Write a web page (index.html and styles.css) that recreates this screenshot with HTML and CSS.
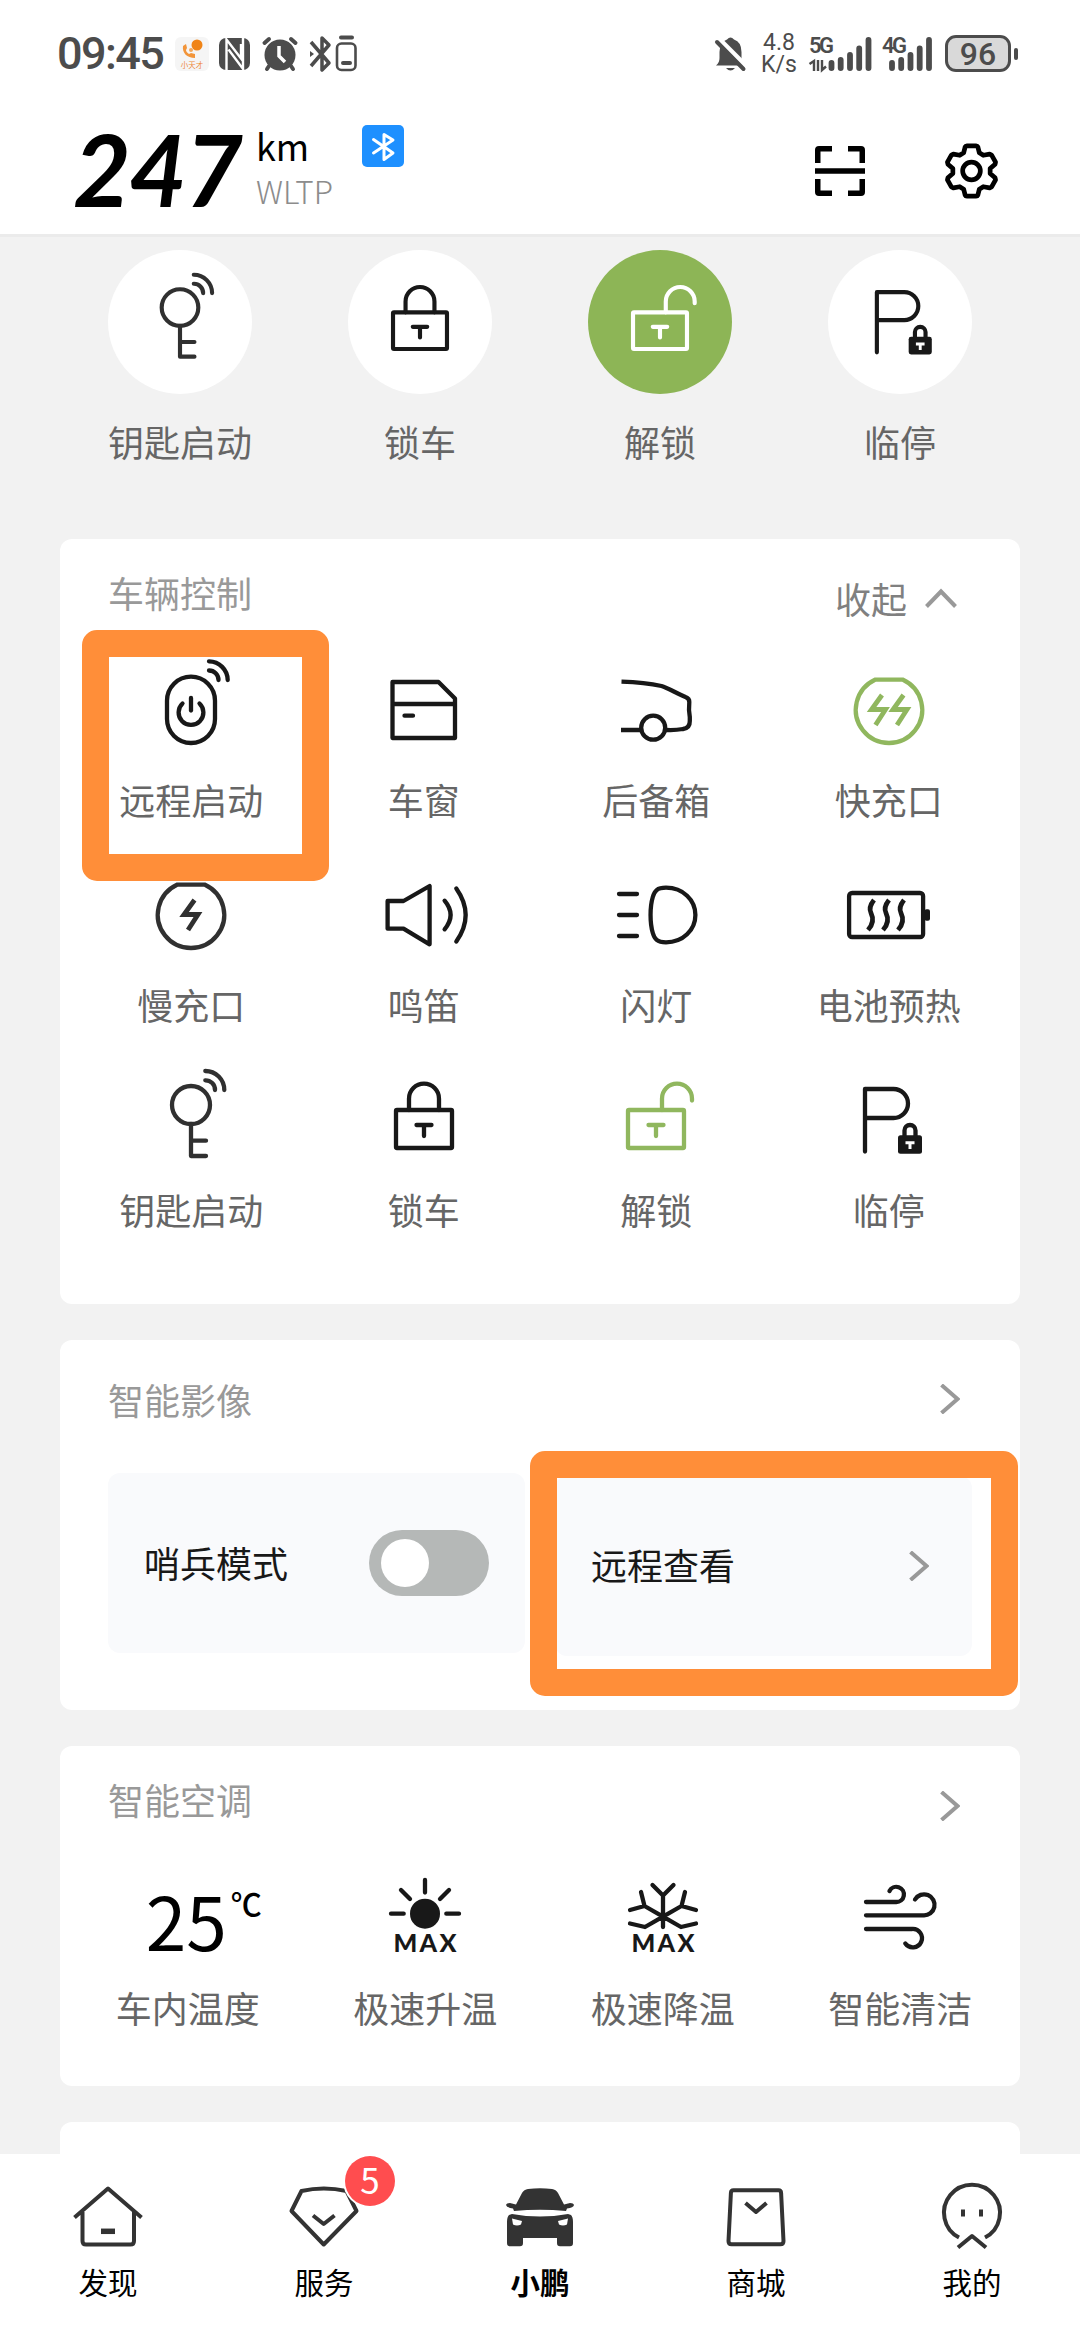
FILE: index.html
```html
<!DOCTYPE html>
<html lang="zh-CN">
<head>
<meta charset="utf-8">
<title>车辆控制</title>
<link rel="stylesheet" href="styles.css">
</head>
<body>
<svg class="defs" aria-hidden="true">
  <symbol id="key" viewBox="0 0 110 110"><circle cx="55" cy="40" r="19"/><path d="M55 59V91H70M55 75.7H70"/><path d="M69.3 6A19 19 0 0 1 88.3 25M69.3 15.3A9.5 9.5 0 0 1 79 25"/></symbol>
  <symbol id="lock" viewBox="0 0 110 110"><rect x="27" y="45" width="56" height="38" rx="1"/><path d="M40 45V33.7a15 15 0 0 1 30 0V45M47.5 60H62.5M55 60V71"/></symbol>
  <symbol id="unlock" viewBox="0 0 110 110"><rect x="27" y="45" width="56" height="38" rx="1"/><path d="M61 45V33.7a15 15 0 0 1 30 0V35.5M47.5 60H62.5M55 60V71"/></symbol>
  <symbol id="park" viewBox="0 0 110 110"><path d="M31 86.5V24H59.5a14.5 14.5 0 0 1 0 29H31"/><rect class="solid" x="64" y="70.3" width="24" height="18.4" rx="2.5"/><path d="M70.5 71V65.5a5.5 5.5 0 0 1 11 0V71"/><path class="notch" d="M71.5 77.8H80.5M76 77V84"/></symbol>
  <symbol id="arrow" viewBox="0 0 20 30"><path d="M1.500 1L17.500 15L1.500 29"/></symbol>
</svg>

<div class="status">
  <span class="clock">09:45</span>
  <svg class="s-app" viewBox="0 0 34 34"><rect width="34" height="34" rx="6" fill="#f5f5f5"/><circle cx="22" cy="8" r="5.500" fill="#f08416"/><path d="M8 9C7 16 12 21 20 21V17L16 16L14 17C12 16 11 14 11 13L12 11L11 7Z" fill="#f2953a"/><circle cx="16" cy="13" r="2" fill="#f5a85a"/><text x="17" y="30.500" text-anchor="middle" font-size="7.500" fill="#ee8a3a">小天才</text></svg>
  <svg class="s-nfc" viewBox="0 0 32 34"><rect y="1" width="31" height="32" rx="7" fill="#4c4c4c"/><path d="M7.500 33V2.500L22 21.500V7M9.500 12.500L24 32V1" fill="none" stroke="#fff" stroke-width="2.400"/></svg>
  <svg class="s-alarm" viewBox="0 0 36 36"><g fill="none" stroke="#4c4c4c" stroke-width="4" stroke-linecap="round"><path d="M2.500 7L7 3M33.500 7L29 3M7 30L5 33M29 30L31 33"/></g><circle cx="18" cy="19" r="15.500" fill="#4c4c4c"/><path d="M17 10V20L23 26" fill="none" stroke="#fff" stroke-width="3.500"/></svg>
  <svg class="s-bt" viewBox="0 0 48 36"><g fill="none" stroke="#4c4c4c" stroke-width="3.500" stroke-linejoin="round"><path d="M2 6L20 27L13 34V2L20 9L2 30"/><rect x="28" y="7.500" width="18.500" height="26.500" rx="4.500" stroke-width="2.600"/></g><path d="M32 1.500H43M34 27H41" stroke="#4c4c4c" stroke-width="4" stroke-linecap="round"/><path d="M1 15L5 18L1 21Z" fill="#4c4c4c"/></svg>
  <span class="grow"></span>
  <svg class="s-bell" viewBox="0 0 31 36"><path d="M1 29.500Q4.500 27 4.500 22V16Q4.500 6 12 3.500Q15.500-0.500 19 3.500Q26.500 6 26.500 16V22Q26.500 27 30 29.500Z" fill="#4c4c4c"/><path d="M11 32H20Q15.500 37 11 32Z" fill="#4c4c4c"/><path d="M3 2L31 30" stroke="#fff" stroke-width="5"/><path d="M2 6L28.500 33" stroke="#4c4c4c" stroke-width="4" stroke-linecap="round"/></svg>
  <div class="speed"><span>4.8</span><span>K/s</span></div>
  <div class="signal">
    <span class="net">5G</span>
    <svg viewBox="0 0 63 36"><path d="M0.500 28L5 25V35M9 24V35M13 24V34L17 30.500" fill="none" stroke="#4c4c4c" stroke-width="2.400"/><path d="M22.500 27V32M31.700 24V32M41 19V32M50.200 12.500V32M59.500 4V32" stroke="#4c4c4c" stroke-width="5.800" stroke-linecap="round"/></svg>
  </div>
  <div class="signal second">
    <span class="net">4G</span>
    <svg viewBox="0 0 63 36"><path d="M10 27V32M19.200 24V32M28.500 19V32M37.700 12.500V32M47 4V32" stroke="#4c4c4c" stroke-width="5.800" stroke-linecap="round"/></svg>
  </div>
  <span class="battery">96</span><span class="nub"></span>
</div>

<header class="top">
  <span class="range">247</span>
  <div class="unit"><span class="km">km</span><span class="wltp">WLTP</span></div>
  <svg class="ble" viewBox="0 0 42 42"><rect width="42" height="42" rx="5" fill="#1e90ff"/><path d="M11.500 14.500L31 28L22 34.500V9.500L31 15L11.500 28" fill="none" stroke="#fff" stroke-width="3" stroke-linecap="round" stroke-linejoin="round"/></svg>
  <span class="grow"></span>
  <svg class="scan" viewBox="0 0 50 50"><path d="M2.750 17V4Q2.750 2.750 4 2.750H17M33 2.750H46Q47.250 2.750 47.250 4V17M2.750 33V46Q2.750 47.250 4 47.250H17M33 47.250H46Q47.250 47.250 47.250 46V33M0 25H50"/></svg>
  <svg class="gear" viewBox="0 0 54 56"><circle cx="27" cy="28" r="9"/><path d="M20.500 3.500Q21 2.300 22.300 2.300H31.700Q33 2.300 33.500 3.500L35 9.500L39 12L45.500 10.800L47.500 11.800L51.500 19L51 21L46 25.500V30.500L51 35L51.500 37L47.500 44.200L45.500 45.200L39 44L35 46.500L33.500 52.500Q33 53.700 31.700 53.700H22.300Q21 53.700 20.500 52.500L19 46.500L15 44L8.500 45.200L6.500 44.200L2.500 37L3 35L8 30.500V25.500L3 21L2.500 19L6.500 11.800L8.500 10.800L15 12L19 9.500Z"/></svg>
</header>

<main class="content">
  <section class="quick">
    <div class="cell"><span class="disc soft"><svg class="icon"><use href="#key"/></svg></span><span class="label">钥匙启动</span></div>
    <div class="cell"><span class="disc"><svg class="icon"><use href="#lock"/></svg></span><span class="label">锁车</span></div>
    <div class="cell"><span class="disc on"><svg class="icon"><use href="#unlock"/></svg></span><span class="label">解锁</span></div>
    <div class="cell"><span class="disc"><svg class="icon"><use href="#park"/></svg></span><span class="label">临停</span></div>
  </section>

  <section class="card control">
    <div class="head"><h2>车辆控制</h2><span class="fold">收起<svg viewBox="0 0 32 20"><path d="M1.500 18.500L16 3.500L30.500 18.500"/></svg></span></div>
    <div class="grid">
      <div class="cell"><svg class="icon" viewBox="0 0 110 110"><rect x="31" y="21.700" width="48" height="66.300" rx="24"/><path d="M46.500 48.500A12.400 12.400 0 1 0 63.500 48.500"/><path d="M55 43V55.500"/><path d="M73 6.300A19 19 0 0 1 91.700 25M73 15.500A9.500 9.500 0 0 1 82.500 25"/></svg><span class="label">远程启动</span></div>
      <div class="cell"><svg class="icon" viewBox="0 0 110 110"><path d="M23.500 27H69.500L86 43.500V83H23.500ZM23.500 49H86M35.500 60.700H44"/></svg><span class="label">车窗</span></div>
      <div class="cell"><svg class="icon butt" viewBox="0 0 110 110"><path d="M20.500 26.700Q44 27.500 60.500 31C67 33 75 38 84.500 42Q88.500 43.500 88.300 47Q87.500 55 88.800 62V66Q89 73 82 74Q74 75.500 65 75M20 75H39.500"/><circle cx="52.200" cy="72.700" r="12"/></svg><span class="label">后备箱</span></div>
      <div class="cell"><svg class="icon butt leaf" viewBox="0 0 110 110"><path d="M41 24.700H69A33.200 33.200 0 1 1 41 24.700Z"/><path d="M48 40L37.500 54.500H51.500L41.500 70M69.500 40L59 54.500H73L63 70" class="bolt"/></svg><span class="label">快充口</span></div>
      <div class="cell soft"><svg class="icon butt" viewBox="0 0 110 110"><path d="M41 24.700H69A33.200 33.200 0 1 1 41 24.700Z"/><path d="M58.500 40L48 54.500H62L52 70" class="bolt"/></svg><span class="label">慢充口</span></div>
      <div class="cell"><svg class="icon" viewBox="0 0 110 110"><path d="M18.600 41H34.500L60.600 26V84.300L34.500 68.700H18.600ZM75.600 40.700Q87.600 55 75.600 69.300M87.300 28.500Q106 55 87.300 81.500"/></svg><span class="label">鸣笛</span></div>
      <div class="cell"><svg class="icon" viewBox="0 0 110 110"><path d="M18 34H36M18 55H36M18 76H36M65 27.700C82 27.700 94.400 40 94.400 55C94.400 70 82 82.300 65 82.300C56 82.300 53.500 79 51.800 73C48.800 63 48.800 47 51.800 37C53.500 31 56 27.700 65 27.700Z"/></svg><span class="label">闪灯</span></div>
      <div class="cell"><svg class="icon butt" viewBox="0 0 110 110"><rect x="15.100" y="33" width="74" height="44" rx="3"/><rect class="solid" x="90.500" y="49.300" width="5.500" height="11.400" rx="2"/><path d="M40 40C36 45 35 49 37 53C40 59 38.500 65 34 70M55 40C51 45 50 49 52 53C55 59 53.500 65 49 70M70 40C66 45 65 49 67 53C70 59 68.500 65 64 70" class="bolt"/></svg><span class="label">电池预热</span></div>
      <div class="cell soft"><svg class="icon"><use href="#key"/></svg><span class="label">钥匙启动</span></div>
      <div class="cell"><svg class="icon"><use href="#lock"/></svg><span class="label">锁车</span></div>
      <div class="cell"><svg class="icon leaf"><use href="#unlock"/></svg><span class="label">解锁</span></div>
      <div class="cell"><svg class="icon"><use href="#park"/></svg><span class="label">临停</span></div>
    </div>
    <div class="mark mark-start"></div>
  </section>

  <section class="card video">
    <div class="head"><h2>智能影像</h2><svg class="arrow"><use href="#arrow"/></svg></div>
    <div class="tiles">
      <div class="tile"><span>哨兵模式</span><span class="toggle"></span></div>
      <div class="tile view"><span>远程查看</span><svg class="arrow"><use href="#arrow"/></svg></div>
    </div>
    <div class="mark mark-view"></div>
  </section>

  <section class="card climate">
    <div class="head"><h2>智能空调</h2><svg class="arrow"><use href="#arrow"/></svg></div>
    <div class="grid">
      <div class="cell"><span class="temp">25<sup>℃</sup></span><span class="label">车内温度</span></div>
      <div class="cell"><svg class="icon" viewBox="0 0 110 110"><circle class="solid" cx="55" cy="53.700" r="15"/><path d="M55 20V32.500M21 53.700H33.700M76.300 53.700H89M31 30L40 39M79 30L70 39"/><text x="23.500" y="91.600" textLength="63">MAX</text></svg><span class="label">极速升温</span></div>
      <div class="cell"><svg class="icon" viewBox="0 0 110 110"><path d="M55 36V67M44.500 25L55 35.500L65.500 25M55 56.700L36.500 46L33 32M36.500 46L22 50M55 56.700L73.500 46L77 32M73.500 46L88 50M55 56.700L37 67L22 63.500M55 56.700L73 67L88 63.500"/><text x="23.500" y="91.600" textLength="63">MAX</text></svg><span class="label">极速降温</span></div>
      <div class="cell"><svg class="icon" viewBox="0 0 110 110"><path d="M21 42H51A7.600 7.600 0 1 0 44.500 31M21 55.300H78.300A10.500 10.500 0 1 0 70 39.500M21 69H67A9.200 9.200 0 1 1 60.300 83.500"/></svg><span class="label">智能清洁</span></div>
    </div>
  </section>

  <section class="card next"></section>
</main>

<nav class="tabs">
  <div class="tab"><svg viewBox="0 0 80 80"><path d="M6.500 41.500L40 12.500L73.500 41.500M14.500 36V65Q14.500 68.500 18 68.500H62.500Q66 68.500 66 65V36"/><path d="M33 55.300H47" stroke-width="5.500"/></svg><span>发现</span></div>
  <div class="tab"><svg viewBox="0 0 80 80"><path d="M17.500 15Q39.700 10 62.500 15L72.500 35L39.700 68.500L7.500 35Z"/><path d="M29 39.500L39.700 48L50.500 39.500"/></svg><span>服务</span><i class="badge">5</i></div>
  <div class="tab current"><svg viewBox="0 0 80 80"><path class="solid" d="M28 13Q40 11.500 52 13Q56 13.500 58 17L64 28.500L70 27Q73.500 27 74 29Q73.500 31.500 67 32.500L66 35Q40 32.500 14 35L13 32.500Q6.500 31.500 6 29Q6.500 27 10 27L16 28.500L22 17Q24 13.500 28 13Z"/><path class="solid" fill-rule="evenodd" d="M12 38Q40 43 68 38L71 39Q73 41 73 46V67Q73 70.300 70 70.300H60Q57 70.300 57 67V62H23V67Q23 70.300 20 70.300H10Q7 70.300 7 67V46Q7 41 9 39ZM12 42.500L13 48.500Q17 50.500 21 48.500L22 45ZM68 42.500L67 48.500Q63 50.500 59 48.500L58 45Z"/></svg><span>小鹏</span></div>
  <div class="tab"><svg viewBox="0 0 80 80"><path d="M17.500 14.300H62.500Q65 14.300 65.100 17L67.500 65Q67.500 68.300 64.500 68.300H15.500Q12.500 68.300 12.500 65L14.900 17Q15 14.300 17.500 14.300ZM29.500 27L40 36L50.500 27"/></svg><span>商城</span></div>
  <div class="tab"><svg viewBox="0 0 80 80"><path d="M27 61.500A28 28 0 1 1 53 61.500M26 71.500L40 60L54 71.500M31 33.500V40.500M49 33.500V40.500"/></svg><span>我的</span></div>
</nav>
</body>
</html>
```

FILE: styles.css
```css
* { box-sizing: border-box; margin: 0; }
body {
  width: 1080px;
  height: 2340px;
  display: flex;
  flex-direction: column;
  background: #f2f2f2;
  color: #000;
  font-family: "Noto Sans CJK SC", sans-serif;
  overflow: hidden;
}
svg { display: block; flex: none; overflow: visible; }
.defs { position: absolute; width: 0; height: 0; }
.grow { flex: 1; }

/* status bar */
.status {
  height: 107px;
  flex: none;
  display: flex;
  align-items: center;
  padding: 0 62px 0 57px;
  background: #fff;
  color: #4c4c4c;
}
.clock { width: 118px; font: 500 45px/50px Roboto, sans-serif; letter-spacing: -1.6px; }
.s-app { width: 34px; height: 34px; }
.s-nfc { width: 32px; height: 34px; margin-left: 10px; }
.s-alarm { width: 36px; height: 36px; margin-left: 11px; }
.s-bt { width: 48px; height: 36px; margin-left: 11px; }
.s-bell { width: 31px; height: 36px; }
.speed {
  width: 36px;
  margin-left: 15px;
  display: flex;
  flex-direction: column;
  align-items: center;
  font: 23px/22px Roboto, sans-serif;
}
.signal { width: 63px; height: 36px; margin-left: 12px; display: grid; }
.signal > * { grid-area: 1 / 1; }
.signal svg { width: 63px; height: 36px; }
.second { width: 52px; margin-left: 10px; }
.net { font: 600 22px/20px Roboto, sans-serif; letter-spacing: -2.5px; }
.battery {
  width: 66px;
  height: 37px;
  margin-left: 11px;
  border: 3px solid #4c4c4c;
  border-radius: 11px;
  background: #d9d9d9;
  font: 500 32px/32px Roboto, sans-serif;
  text-align: center;
}
.nub { width: 4px; height: 12px; margin-left: 3px; border-radius: 2px; background: #4c4c4c; }

/* range header */
.top {
  height: 130px;
  flex: none;
  display: flex;
  align-items: flex-start;
  padding: 0 82px 0 73px;
  background: #fff;
  border-bottom: 3px solid #ebebeb;
}
.range { width: 183px; padding-top: 11px; font: italic bold 100px/100px Lato, sans-serif; letter-spacing: -2px; }
.unit { width: 106px; padding-top: 20px; display: flex; flex-direction: column; gap: 9px; line-height: 36px; }
.km { font-size: 36px; }
.wltp { font-size: 31.5px; font-weight: 300; color: #8c8c8c; }
.ble { width: 42px; height: 42px; margin-top: 18px; }
.scan { width: 50px; height: 50px; margin: 39px 80px 0 0; }
.gear { width: 53px; height: 56px; margin-top: 36px; }
.scan, .gear { fill: none; stroke: #000; stroke-width: 5.5; }
.gear { stroke-width: 4.8; stroke-linejoin: round; }

/* shared pieces */
.content { flex: 1; min-height: 0; overflow: hidden; display: flex; flex-direction: column; align-items: center; }
.icon {
  width: 110px;
  height: 110px;
  color: #181818;
  fill: none;
  stroke: currentColor;
  stroke-width: 4.3;
  stroke-linecap: round;
  stroke-linejoin: round;
}
.soft .icon { color: #303030; }
.icon.butt { stroke-linecap: butt; stroke-linejoin: miter; }
.icon.leaf { color: #90b75e; }
.bolt { stroke-width: 4.8; }
.icon .solid, .solid { fill: currentColor; stroke: none; }
.notch { stroke: #fff; stroke-width: 3; stroke-linecap: butt; }
.icon text { font: 900 25px Lato, sans-serif; fill: currentColor; stroke: none; }
.cell { display: flex; flex-direction: column; align-items: center; }
.label { font-size: 36px; line-height: 36px; color: #666; white-space: nowrap; }
.card { position: relative; width: 960px; flex: none; margin-bottom: 36px; border-radius: 12px; background: #fff; }
.head { height: 54px; padding: 0 60px 0 48px; display: flex; justify-content: space-between; align-items: center; }
h2 { font-size: 36px; line-height: 54px; font-weight: 400; color: #999; }
.grid { display: grid; }
.arrow { width: 20px; height: 30px; fill: none; stroke: #999; stroke-width: 4; }
.mark { position: absolute; background: transparent; border: 27px solid #ff8e39; border-radius: 15px; }

/* quick actions */
.quick { width: 960px; height: 302px; flex: none; padding-top: 13px; display: grid; grid-template-columns: repeat(4, 1fr); }
.quick .cell { gap: 29px; }
.disc { width: 144px; height: 144px; border-radius: 50%; background: #fff; display: grid; place-items: center; }
.disc .icon { width: 106px; height: 106px; }
.disc.on { background: #8db556; }
.disc.on .icon { color: #fff; }

/* vehicle control */
.control { height: 765px; padding-top: 26px; }
.fold { display: flex; align-items: center; gap: 18px; margin: 11px 3px 0 0; font-size: 36px; line-height: 54px; color: #808080; }
.fold svg { width: 32px; height: 20px; fill: none; stroke: #999; stroke-width: 4; }
.control .grid { width: 930px; margin: 36px 0 0 15px; grid-template-columns: repeat(4, 1fr); row-gap: 43px; }
.control .cell { gap: 16px; }
.mark-start { left: 22px; top: 91px; width: 247px; height: 251px; }

/* video */
.video { height: 370px; padding-top: 32px; }
.tiles { display: grid; grid-template-columns: 417px 417px; gap: 30px; margin: 47px 48px 0; }
.tile {
  height: 180px;
  display: flex;
  align-items: center;
  justify-content: space-between;
  padding: 0 36px;
  border-radius: 12px;
  background: #f9fafc;
  font-size: 36px;
  color: #181818;
}
.tile > span:first-child { line-height: 36px; padding-bottom: 2px; }
.tile.view { margin: 3px 0 -3px; padding-right: 43px; }
.tile.view > span:first-child { padding-bottom: 4px; }
.toggle { width: 120px; height: 66px; padding: 9px 12px; border-radius: 33px; background: #b5b8b7; }
.toggle::before { content: ""; display: block; width: 48px; height: 48px; border-radius: 50%; background: #fff; }
.mark-view { left: 470px; top: 111px; width: 488px; height: 245px; }

/* climate */
.climate { height: 340px; padding-top: 26px; }
.climate .head .arrow { margin-top: 14px; }
.climate .grid { width: 950px; margin: 34px 0 0 9px; grid-template-columns: repeat(4, 1fr); }
.climate .cell { gap: 18px; }
.temp { height: 111px; padding: 23px 0 0 37px; display: flex; align-items: flex-start; font-size: 73px; line-height: 73px; }
.temp sup { width: 36px; font-size: 31px; line-height: 33px; font-weight: 500; margin-left: 4px; padding-top: 3px; }
.climate .icon { margin-bottom: 1px; }
.next { height: 200px; }

/* bottom tabs */
.tabs { height: 186px; flex: none; display: grid; grid-template-columns: repeat(5, 1fr); background: #fff; }
.tab { position: relative; padding-top: 22px; display: flex; flex-direction: column; align-items: center; gap: 7px; font-size: 29.5px; line-height: 36px; }
.tab svg { width: 80px; height: 80px; color: #333; fill: none; stroke: #333; stroke-width: 4; stroke-linejoin: round; }
.current { font-weight: 700; }
.badge {
  position: absolute;
  left: 129px;
  top: 2px;
  width: 50px;
  height: 50px;
  border-radius: 50%;
  background: #ff4d4f;
  box-shadow: 0 0 0 2px #fff;
  color: #fff;
  font-style: normal;
  font-size: 35px;
  line-height: 46px;
  text-align: center;
}
```
